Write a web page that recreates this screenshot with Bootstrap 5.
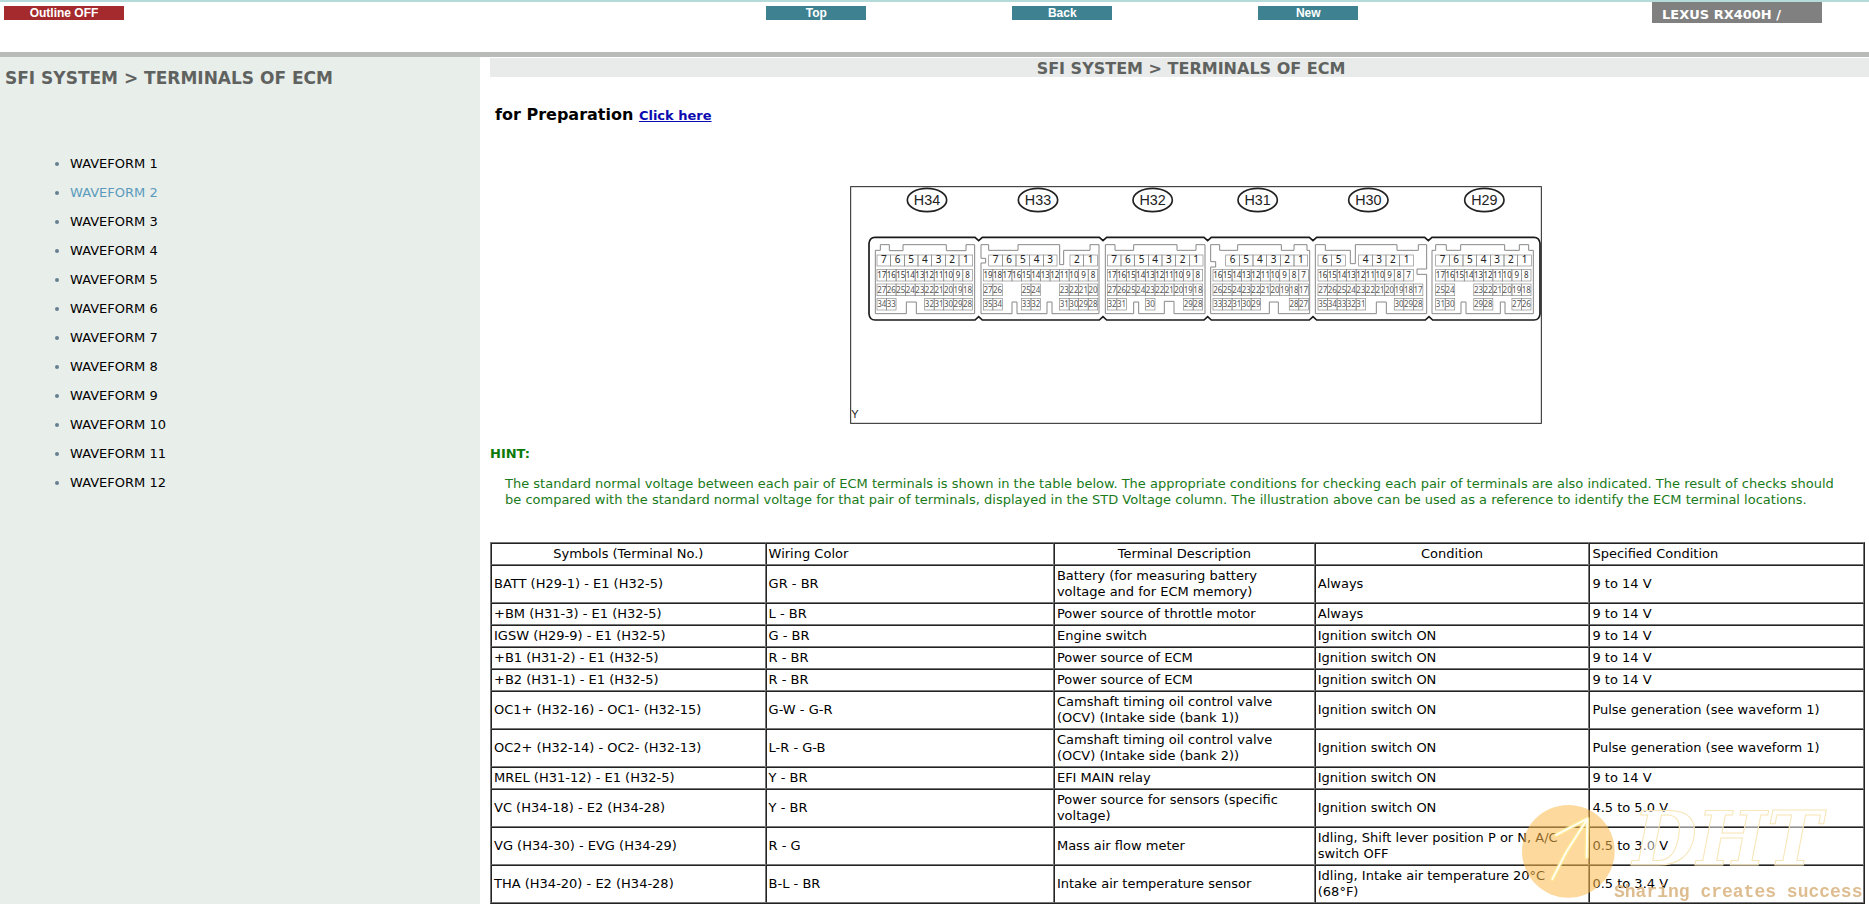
<!DOCTYPE html>
<html lang="en">
<head>
<meta charset="utf-8">
<meta name="viewport" content="width=device-width, initial-scale=1">
<title>SFI SYSTEM &gt; TERMINALS OF ECM</title>
<link href="https://cdn.jsdelivr.net/npm/bootstrap@5.3.0/dist/css/bootstrap.min.css" rel="stylesheet">
<style>
body{font-family:Verdana,"DejaVu Sans",sans-serif;font-size:13px;line-height:16px;color:#000;background:#fff;overflow:hidden}
.topbar{height:57px;border-top:2px solid #b5dada;border-bottom:5px solid #b9bbb9}
.bar-btn{font:bold 12px/14px "Liberation Sans",Arial,sans-serif;color:#fff;background:#3e8291;border:0;border-radius:0;padding:0;width:100px;height:14px;margin-top:4px}
.bar-btn:hover{color:#fff;background:#2f6c7a}
.bar-btn.outline-toggle{background:#a52a2e;width:120px}
.bar-side{flex:0 0 41%}
.bar-mid{gap:146px}
.model-tag{background:#808080;color:#fff;font-weight:bold;width:170px;height:21px;line-height:25px;padding-left:10px;margin-right:47px}
.outline-pane{flex:0 0 480px;background:#e8eeea}
.outline-pane h1{font-size:17px;line-height:20px;font-weight:bold;color:#5f625f;margin:11px 0 68px 5px}
.wave-list{margin:0;padding-left:70px}
.wave-list li{line-height:16px;margin-bottom:13px}
.wave-list li::marker{color:#66808f}
.wave-list a{color:#000;text-decoration:none}
.wave-list a.current{color:#5a9bbd}
.doc-pane{margin:1px -23px 0 10px}
.doc-pane h2{font-size:16px;line-height:17px;font-weight:bold;color:#5f625f;background:#e8ebe9;text-align:center;padding-top:2px;margin:0 0 28px}
.prep{font-size:16px;line-height:20px;font-weight:bold;margin:0 0 60px 5px}
.prep a{font-size:13px;color:#0b0bb0}
.connector-fig{display:block;width:692px;height:238px;margin:0 auto 22px}
.fig-wrap{padding-left:9px}
.hint{color:#1a7a1a;margin-bottom:34px}
.hint-title{font-weight:bold;color:#0b7a0b;margin-bottom:14px}
.hint p{margin:0 0 0 15px}
.terminals{width:calc(100% - 27px);table-layout:fixed;border-collapse:separate;border-spacing:0;border:1px solid #777;border-right-color:#222;border-bottom-color:#222;margin:0}
.terminals th,.terminals td{border:1px solid #222;border-right-color:#777;border-bottom-color:#777;padding:2px;font-weight:normal;vertical-align:middle;height:22px;text-align:left}
.terminals th.mid{text-align:center}
.brand-mark{position:fixed;right:0;bottom:0;width:369px;height:124px;pointer-events:none}
</style>
</head>
<body class="vh-100 d-flex flex-column">
<header class="topbar d-flex align-items-start flex-shrink-0">
  <div class="bar-side ps-1"><button type="button" class="btn bar-btn outline-toggle d-block">Outline OFF</button></div>
  <nav class="bar-mid d-flex" aria-label="Page">
    <button type="button" class="btn bar-btn">Top</button>
    <button type="button" class="btn bar-btn">Back</button>
    <button type="button" class="btn bar-btn">New</button>
  </nav>
  <div class="model-tag ms-auto">LEXUS RX400H /</div>
</header>
<div class="d-flex flex-grow-1">
  <aside class="outline-pane">
    <h1>SFI SYSTEM &gt; TERMINALS OF ECM</h1>
    <ul class="wave-list">
      <li><a href="#w1">WAVEFORM 1</a></li>
      <li><a href="#w2" class="current">WAVEFORM 2</a></li>
      <li><a href="#w3">WAVEFORM 3</a></li>
      <li><a href="#w4">WAVEFORM 4</a></li>
      <li><a href="#w5">WAVEFORM 5</a></li>
      <li><a href="#w6">WAVEFORM 6</a></li>
      <li><a href="#w7">WAVEFORM 7</a></li>
      <li><a href="#w8">WAVEFORM 8</a></li>
      <li><a href="#w9">WAVEFORM 9</a></li>
      <li><a href="#w10">WAVEFORM 10</a></li>
      <li><a href="#w11">WAVEFORM 11</a></li>
      <li><a href="#w12">WAVEFORM 12</a></li>
    </ul>
  </aside>
  <main class="doc-pane flex-grow-1">
    <h2>SFI SYSTEM &gt; TERMINALS OF ECM</h2>
    <p class="prep">for Preparation <a href="#prep">Click here</a></p>
    <div class="fig-wrap">
    <svg class="connector-fig" viewBox="0 0 2076 714" role="img" aria-label="ECM connector terminals">
      <rect x="2" y="2" width="2072" height="710" fill="none" stroke="#222" stroke-width="3"/>
      <path fill="none" stroke="#1a1a1a" stroke-width="5" d="M75,154H375L386,164L397,154H748L759,164L770,154H1062L1073,164L1084,154H1378L1389,164L1400,154H1724L1735,164L1746,154H2052Q2068,154 2070,172V384Q2068,402 2052,402H1748L1737,392L1726,402H1400L1389,392L1378,402H1084L1073,392L1062,402H770L759,392L748,402H397L386,392L375,402H75Q59,402 57,384V172Q59,154 75,154Z"/>
      <g fill="none" stroke="#888" stroke-width="3">
        <g transform="translate(-31,-19)">
          <path d="M107,212H122V195H149V213H190V195H320V213H379V195H405V402H230V367H200V402H107Z"/>
          <path d="M424,195H447V212H535V195H660V255H672V212H751V195H778V402H637V367H622V402H532V367H517V402H424V250H438V236H424Z"/>
        </g>
        <g transform="translate(719,-19)">
          <path d="M47,195H76V212H132V195H262V212H319V195H346V402H253V365H224V402H147V367H132V402H47Z"/>
          <path d="M363,195H390V212H444V195H575V212H613V195H652V212H660V402H566V367H539V402H363V262H378V246H363Z"/>
        </g>
        <g transform="translate(1379,-19)">
          <path d="M17,195H47V212H122V252H137V195H262V212H326V195H351V268H322V284H351V402H230V367H200V402H17Z"/>
          <path d="M367,212H378V195H410V212H453V195H585V212H629V195H657V212H671V402H586V367H572V402H469V367H454V402H367Z"/>
        </g>
      </g>
      <g id="pins" font-family="'Noto Sans','Open Sans',sans-serif" text-anchor="middle" fill="#333"></g>
      <text x="4" y="697" font-family="'Liberation Sans',Arial,sans-serif" font-size="33" fill="#222">Y</text>
    </svg>
    </div>
    <section class="hint">
      <div class="hint-title">HINT:</div>
      <p>The standard normal voltage between each pair of ECM terminals is shown in the table below. The appropriate conditions for checking each pair of terminals are also indicated. The result of checks should<br>be compared with the standard normal voltage for that pair of terminals, displayed in the STD Voltage column. The illustration above can be used as a reference to identify the ECM terminal locations.</p>
    </section>
    <table class="terminals">
      <colgroup><col style="width:20%"><col style="width:21%"><col style="width:19%"><col style="width:20%"><col style="width:20%"></colgroup>
      <thead><tr><th class="mid">Symbols (Terminal No.)</th><th>Wiring Color</th><th class="mid">Terminal Description</th><th class="mid">Condition</th><th>Specified Condition</th></tr></thead>
      <tbody>
        <tr><td>BATT (H29-1) - E1 (H32-5)</td><td>GR - BR</td><td>Battery (for measuring battery<br>voltage and for ECM memory)</td><td>Always</td><td>9 to 14 V</td></tr>
        <tr><td>+BM (H31-3) - E1 (H32-5)</td><td>L - BR</td><td>Power source of throttle motor</td><td>Always</td><td>9 to 14 V</td></tr>
        <tr><td>IGSW (H29-9) - E1 (H32-5)</td><td>G - BR</td><td>Engine switch</td><td>Ignition switch ON</td><td>9 to 14 V</td></tr>
        <tr><td>+B1 (H31-2) - E1 (H32-5)</td><td>R - BR</td><td>Power source of ECM</td><td>Ignition switch ON</td><td>9 to 14 V</td></tr>
        <tr><td>+B2 (H31-1) - E1 (H32-5)</td><td>R - BR</td><td>Power source of ECM</td><td>Ignition switch ON</td><td>9 to 14 V</td></tr>
        <tr><td>OC1+ (H32-16) - OC1- (H32-15)</td><td>G-W - G-R</td><td>Camshaft timing oil control valve<br>(OCV) (Intake side (bank 1))</td><td>Ignition switch ON</td><td>Pulse generation (see waveform 1)</td></tr>
        <tr><td>OC2+ (H32-14) - OC2- (H32-13)</td><td>L-R - G-B</td><td>Camshaft timing oil control valve<br>(OCV) (Intake side (bank 2))</td><td>Ignition switch ON</td><td>Pulse generation (see waveform 1)</td></tr>
        <tr><td>MREL (H31-12) - E1 (H32-5)</td><td>Y - BR</td><td>EFI MAIN relay</td><td>Ignition switch ON</td><td>9 to 14 V</td></tr>
        <tr><td>VC (H34-18) - E2 (H34-28)</td><td>Y - BR</td><td>Power source for sensors (specific<br>voltage)</td><td>Ignition switch ON</td><td>4.5 to 5.0 V</td></tr>
        <tr><td>VG (H34-30) - EVG (H34-29)</td><td>R - G</td><td>Mass air flow meter</td><td>Idling, Shift lever position P or N, A/C<br>switch OFF</td><td>0.5 to 3.0 V</td></tr>
        <tr><td>THA (H34-20) - E2 (H34-28)</td><td>B-L - BR</td><td>Intake air temperature sensor</td><td>Idling, Intake air temperature 20°C<br>(68°F)</td><td>0.5 to 3.4 V</td></tr>
      </tbody>
    </table>
  </main>
</div>
<svg class="brand-mark" viewBox="0 0 1107 372" role="img" aria-label="DHT Sharing creates success">
  <circle cx="205" cy="214" r="139" fill="#fcb94c" fill-opacity=".55"/>
  <g fill="none" stroke-linecap="round" stroke-linejoin="round">
    <path d="M157,297L200,214L260,120M168,165L262,116L260,232" stroke="#ffee90" stroke-width="13" stroke-opacity=".7"/>
    <path d="M157,297L200,214L260,120M168,165L262,116L260,232" stroke="#fffef0" stroke-width="6"/>
  </g>
  <text x="398" y="255" font-family="'DejaVu Serif',serif" font-weight="bold" font-style="italic" font-size="222" fill="#fff" fill-opacity=".5" stroke="#f6e6b8" stroke-width="3">DHT</text>
  <text x="342" y="350" font-family="'Liberation Mono',monospace" font-weight="bold" font-size="54" fill="#d8b27c" fill-opacity=".85">Sharing creates success</text>
</svg>
<script src="https://cdn.jsdelivr.net/npm/bootstrap@5.3.0/dist/js/bootstrap.bundle.min.js"></script>
<script>
// Each run: [first slot, first pin number, count]; numbers descend to the right.
// "top" runs give their own left edge, since the top pins are wider.
const connectors = [
  {name:'H34', cx:231,  x:81,   top:[[81,7,7]],           rows:[[[0,17,10]],[[0,27,10]],[[0,34,2],[5,32,5]]]},
  {name:'H33', cx:564,  x:400,  top:[[416,7,5],[660,2,2]], rows:[[[0,19,12]],[[0,27,2],[4,25,2],[8,23,4]],[[0,35,2],[4,33,2],[8,31,4]]]},
  {name:'H32', cx:908,  x:772,  top:[[772,7,7]],          rows:[[[0,17,10]],[[0,27,10]],[[0,32,2],[4,30,1],[8,29,2]]]},
  {name:'H31', cx:1223, x:1089, top:[[1127,6,6]],         rows:[[[0,16,10]],[[0,26,10]],[[0,33,5],[8,28,2]]]},
  {name:'H30', cx:1555, x:1404, top:[[1404,6,2],[1526,4,4]], rows:[[[0,16,10]],[[0,27,11]],[[0,35,5],[8,30,3]]]},
  {name:'H29', cx:1903, x:1757, top:[[1757,7,7]],         rows:[[[0,17,10]],[[0,25,2],[4,23,6]],[[0,31,2],[4,29,2],[8,27,2]]]}
];
const TOP_W = 41, PIN_W = 28.6, ROW_Y = [250, 294, 337];
const pin = (x, y, w, h, n, size, ink) =>
  `<rect x="${x}" y="${y}" width="${w}" height="${h}" fill="none" stroke="#8a8a8a" stroke-width="2"/>` +
  `<text x="${x + w / 2}" y="${y + h - 8}" font-size="${size}" fill="${ink}">${n}</text>`;
let out = '';
for (const c of connectors) {
  out += `<ellipse cx="${c.cx}" cy="42" rx="59" ry="35" fill="none" stroke="#222" stroke-width="5"/>` +
         `<text x="${c.cx}" y="56" font-family="'Liberation Sans',Arial,sans-serif" font-size="43" fill="#222">${c.name}</text>`;
  for (const [x, first, count] of c.top)
    for (let i = 0; i < count; i++) out += pin(x + i * TOP_W, 207, TOP_W, 33, first - i, 30, '#222');
  c.rows.forEach((runs, r) => {
    for (const [slot, first, count] of runs)
      for (let i = 0; i < count; i++) out += pin(c.x + (slot + i) * PIN_W, ROW_Y[r], PIN_W, 35, first - i, 24, r ? '#555' : '#333');
  });
}
document.getElementById('pins').innerHTML = out;
</script>
</body>
</html>
